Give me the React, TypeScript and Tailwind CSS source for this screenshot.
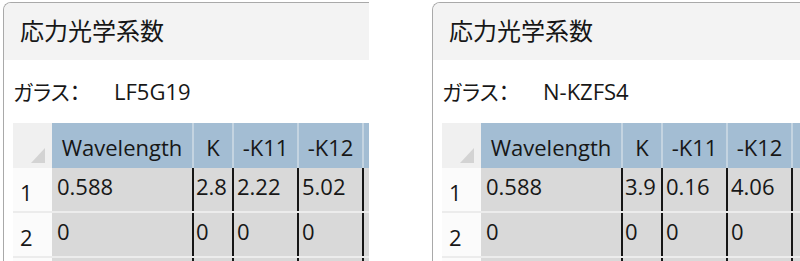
const rows = (k: string, k11: string, k12: string) => [
  { n: "1", wl: "0.588", k, k11, k12 },
  { n: "2", wl: "0", k: "0", k11: "0", k12: "0" },
  { n: "", wl: "", k: "", k11: "", k12: "" },
]

type Props = {
  glass: string
  k: string
  k11: string
  k12: string
  className: string
}

function Corner() {
  return (
    <div className="w-[39px] shrink-0 bg-[#f0f0f0] flex items-end justify-end pr-[7px] pb-[5px]">
      <svg width="14" height="15" viewBox="0 0 14 15">
        <polygon points="14,0 14,15 0,15" fill="#d3d3d3" />
      </svg>
    </div>
  )
}

function StressWindow({ glass, k, k11, k12, className }: Props) {
  return (
    <div
      className={`${className} shrink-0 h-[300px] border-l border-t border-[#a9a9a9] rounded-tl-[8px] overflow-hidden bg-white flex flex-col font-['Open_Sans','Noto_Sans_CJK_JP',sans-serif] text-[#171717]`}
    >
      {/* Title bar */}
      <div className="h-[57px] shrink-0 bg-[#f3f3f3] flex items-center pl-[16px] pb-[4px] text-[24px] font-['Noto_Sans_CJK_JP',sans-serif]">
        応力光学系数
      </div>

      {/* Glass name */}
      <div className="h-[63px] shrink-0 flex items-center pl-[9px]">
        <span className="w-[101px] shrink-0 text-[21px] font-['Noto_Sans_CJK_JP',sans-serif] [font-feature-settings:'palt']">
          ガラス：
        </span>
        <span className="text-[22px]">{glass}</span>
      </div>

      {/* Table */}
      <div className="pl-[9px] flex flex-col text-[22px] leading-[30px]">
        <div className="h-[45px] flex">
          <Corner />
          <div className="w-[140px] shrink-0 bg-[#a3bdd3] flex items-center justify-center pt-[2px]">Wavelength</div>
          <div className="w-[40px] shrink-0 bg-[#a3bdd3] border-l-2 border-[#c4d4e1] flex items-center justify-center pt-[2px]">K</div>
          <div className="w-[65px] shrink-0 bg-[#a3bdd3] border-l-2 border-[#c4d4e1] flex items-center justify-center pt-[2px]">-K11</div>
          <div className="w-[65px] shrink-0 bg-[#a3bdd3] border-l-2 border-[#c4d4e1] flex items-center justify-center pt-[2px]">-K12</div>
          <div className="w-[80px] shrink-0 bg-[#a3bdd3] border-l-2 border-[#c4d4e1]" />
        </div>

        {rows(k, k11, k12).map((r, i) => (
          <div key={i} className="h-[45px] flex border-b-2 border-[#ececec]">
            <div className="w-[39px] shrink-0 bg-[#fbfbfb] pl-[7px] pt-[9px]">{r.n}</div>
            <div className="w-[140px] shrink-0 bg-[#d9d9d9] pl-[5px] pt-[3px]">{r.wl}</div>
            <div className="w-[40px] shrink-0 bg-[#d9d9d9] border-l-2 border-[#161616] pl-[2px] pt-[3px] overflow-hidden whitespace-nowrap">{r.k}</div>
            <div className="w-[65px] shrink-0 bg-[#d9d9d9] border-l-2 border-[#161616] pl-[3px] pt-[3px]">{r.k11}</div>
            <div className="w-[65px] shrink-0 bg-[#d9d9d9] border-l-2 border-[#161616] pl-[3px] pt-[3px]">{r.k12}</div>
            <div className="w-[80px] shrink-0 bg-[#d9d9d9] border-l-2 border-[#161616]" />
          </div>
        ))}
      </div>
    </div>
  )
}

export default function App() {
  return (
    <div className="w-[800px] h-[261px] bg-white flex items-start overflow-hidden">
      <StressWindow className="ml-[3px] mt-[2px] w-[366px]" glass="LF5G19" k="2.8" k11="2.22" k12="5.02" />
      <StressWindow className="ml-[63px] mt-[2px] w-[380px]" glass="N-KZFS4" k="3.9" k11="0.16" k12="4.06" />
    </div>
  )
}
